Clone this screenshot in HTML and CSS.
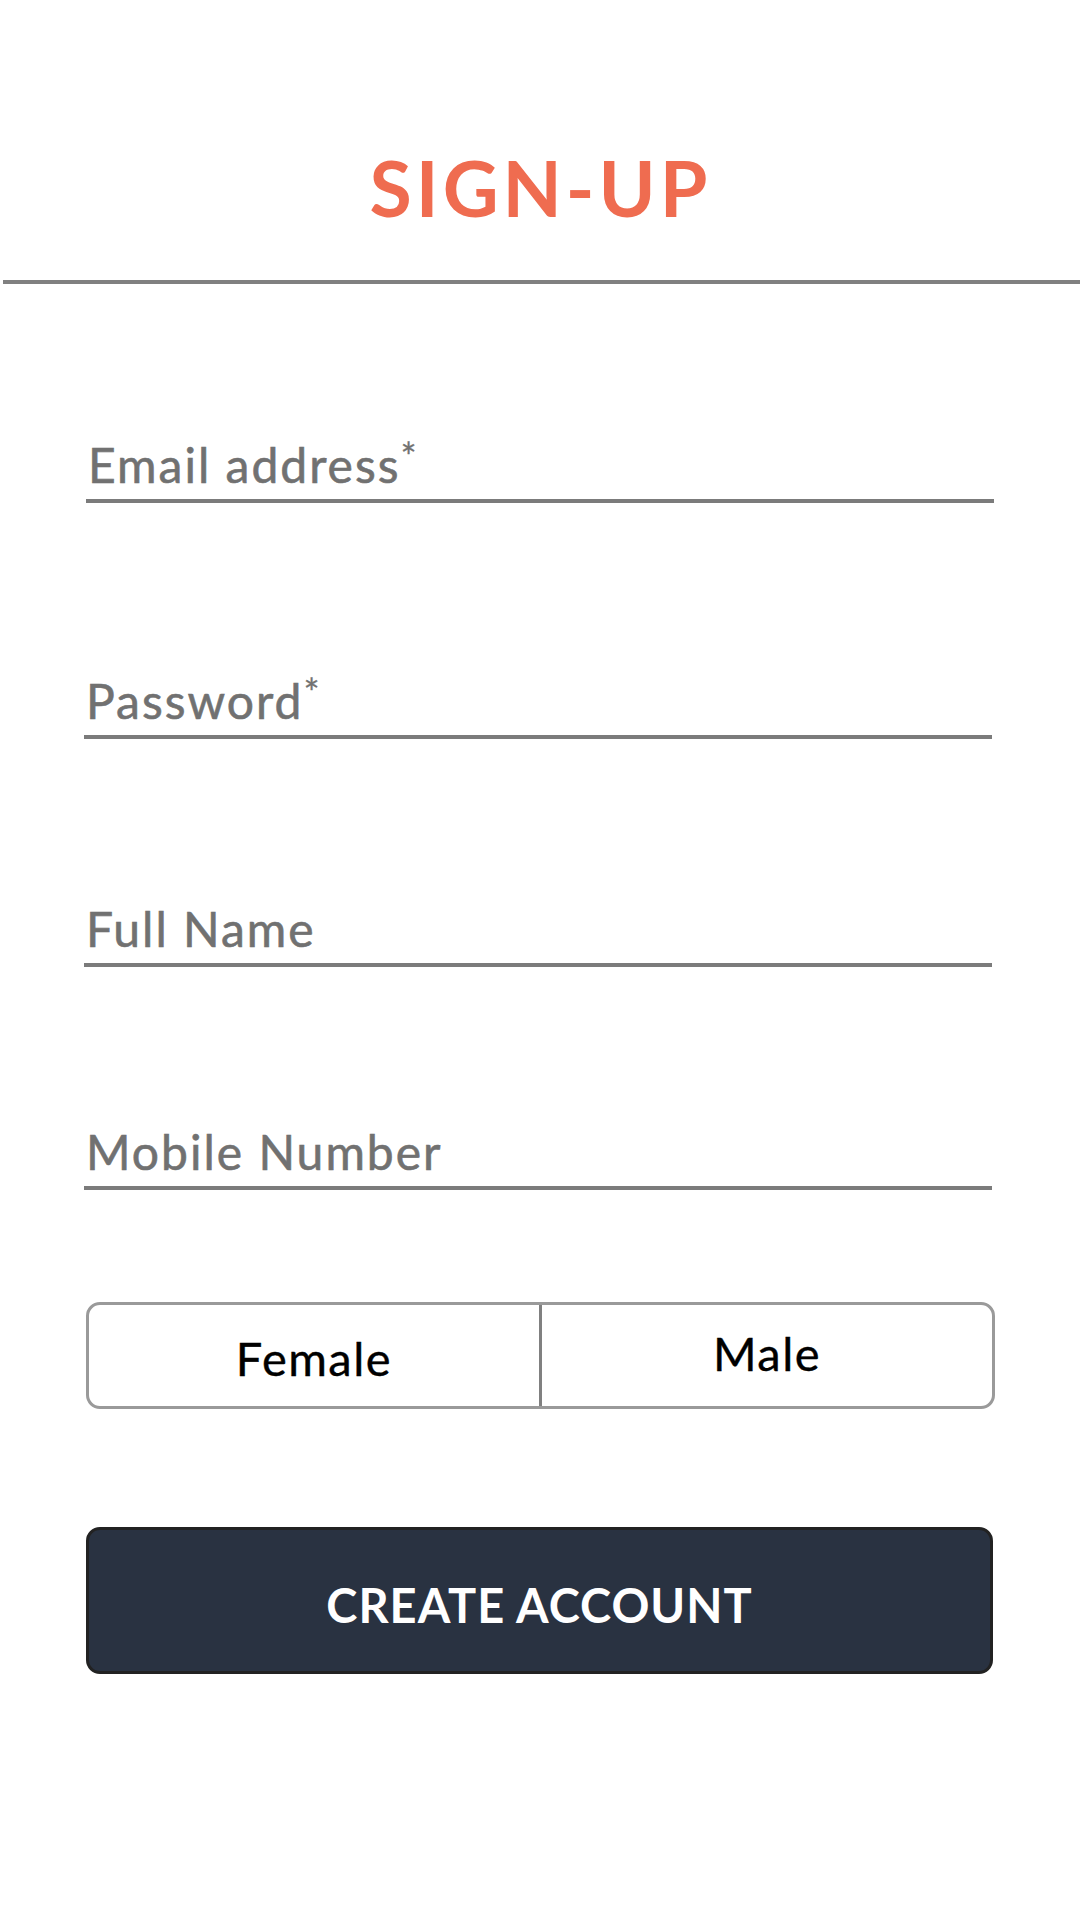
FILE: index.html
```html
<!DOCTYPE html>
<html lang="en">
<head>
<meta charset="utf-8">
<title>Sign-up</title>
<link rel="stylesheet" href="styles.css">
</head>
<body>
<header class="header">
  <h1 class="title">SIGN-UP</h1>
</header>
<main class="form">
  <div class="field field-email">Email address<span class="req">*</span></div>
  <div class="field field-password">Password<span class="req">*</span></div>
  <div class="field field-name">Full Name</div>
  <div class="field field-mobile">Mobile Number</div>
  <div class="toggle">
    <div class="opt opt-female">Female</div>
    <div class="opt opt-male">Male</div>
  </div>
  <button class="create">CREATE ACCOUNT</button>
</main>
</body>
</html>
```

FILE: styles.css
```css
html, body {
  margin: 0;
  padding: 0;
  background: #ffffff;
}
body {
  width: 1080px;
  height: 1920px;
  font-family: "Lato", "Open Sans", sans-serif;
}
.header {
  padding: 149px 0 54px;
  margin-left: 3px;
  border-bottom: 4px solid #808080;
  text-align: center;
}
.title {
  margin: 0;
  font-size: 77px;
  line-height: 1;
  font-weight: 700;
  letter-spacing: 4px;
  color: #ef6c50;
  padding-right: 2px;
}
.form {
  padding: 157px 88px 0 84px;
}
.field {
  font-size: 48px;
  line-height: 1;
  color: #717171;
  letter-spacing: 2px;
  -webkit-text-stroke: 0.6px #717171;
  padding: 0 0 10px 2px;
  border-bottom: 4px solid #7b7b7b;
}
.field-email {
  margin-left: 2px;
  margin-right: -2px;
}
.field-password {
  margin-top: 174px;
}
.field-name {
  margin-top: 166px;
}
.field-mobile {
  margin-top: 161px;
}
.req {
  font-size: 38px;
  line-height: 0;
  letter-spacing: 0;
  vertical-align: 12px;
  -webkit-text-stroke: 0.3px #717171;
}
.toggle {
  margin-top: 112px;
  margin-left: 2px;
  margin-right: -3px;
  height: 101px;
  display: flex;
  border: 3px solid #9a9a9a;
  border-radius: 14px;
}
.opt {
  flex: 1;
  display: flex;
  align-items: center;
  justify-content: center;
  font-size: 47px;
  letter-spacing: 1.5px;
  -webkit-text-stroke: 0.4px #000;
  color: #000;
}
.opt-female {
  border-right: 3px solid #808080;
  padding-top: 4px;
}
.opt-male {
  padding-bottom: 6px;
}
.create {
  display: block;
  width: calc(100% - 1px);
  margin-top: 118px;
  margin-left: 2px;
  height: 147px;
  background: #293241;
  border: 3px solid #222;
  border-radius: 14px;
  color: #fff;
  font-family: "Lato", "Open Sans", sans-serif;
  font-size: 47px;
  font-weight: 700;
  letter-spacing: 1px;
  padding: 8px 0 0;
}
```
